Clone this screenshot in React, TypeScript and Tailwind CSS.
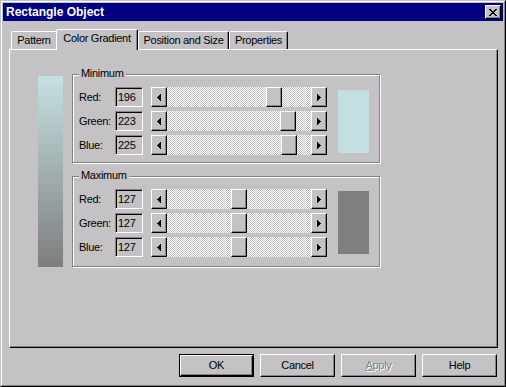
import React from "react";

const RAISED =
  "border border-t-white border-l-white border-r-black border-b-black shadow-[inset_-1px_-1px_0_#848284]";

function Arrow({ dir }: { dir: "left" | "right" }) {
  const cols = [1, 3, 5, 7];
  const order = dir === "left" ? cols : [...cols].reverse();
  return (
    <svg width="4" height="7" shapeRendering="crispEdges">
      {order.map((h, i) => (
        <rect key={i} x={i} y={(7 - h) / 2} width="1" height={h} fill="#000" />
      ))}
    </svg>
  );
}

function ArrowBtn({ dir }: { dir: "left" | "right" }) {
  return (
    <div className={`flex h-[20px] w-[16px] shrink-0 items-center justify-center bg-[#c4c2c4] ${RAISED}`}>
      <Arrow dir={dir} />
    </div>
  );
}

function ScrollBar({ value }: { value: number }) {
  const pos = Math.round((value / 255) * 129);
  return (
    <div className="flex h-[20px] w-[176px]">
      <ArrowBtn dir="left" />
      <div className="flex flex-1 bg-[image:repeating-conic-gradient(#ffffff_0%_25%,#c4c2c4_0%_50%)] bg-[length:2px_2px]">
        <div className="shrink-0" style={{ width: pos }} />
        <div className={`h-[20px] w-[16px] shrink-0 bg-[#c4c2c4] ${RAISED}`} />
      </div>
      <ArrowBtn dir="right" />
    </div>
  );
}

function Field({ value }: { value: number }) {
  return (
    <div className="h-[20px] w-[28px] border border-t-[#848284] border-l-[#848284] border-r-white border-b-white pl-[2px] text-[11px] leading-[18px] text-black shadow-[inset_1px_1px_0_#000]">
      {value}
    </div>
  );
}

function Row({ label, value }: { label: string; value: number }) {
  return (
    <div className="flex h-[20px] items-center">
      <span className="w-[36px] text-[11px] leading-[13px]">{label}</span>
      <Field value={value} />
      <div className="ml-[8px]">
        <ScrollBar value={value} />
      </div>
    </div>
  );
}

function Group({
  title,
  values,
  color,
  h,
  swatchTop,
}: {
  title: string;
  values: [number, number, number];
  color: string;
  h: string;
  swatchTop: string;
}) {
  return (
    <div
      className={`relative flex w-[308px] items-start border border-[#848284] pl-[6px] pt-[12px] shadow-[inset_1px_1px_0_#fff,1px_1px_0_#fff] ${h}`}
    >
      <span className="absolute left-[6px] top-[-8px] bg-[#c4c2c4] px-[2px] text-[11px] leading-[13px]">
        {title}
      </span>
      <div className="flex flex-col gap-[4px]">
        <Row label="Red:" value={values[0]} />
        <Row label="Green:" value={values[1]} />
        <Row label="Blue:" value={values[2]} />
      </div>
      <div className={`ml-[11px] h-[63px] w-[31px] ${swatchTop} ${color}`} />
    </div>
  );
}

function GradientBar() {
  const n = 28;
  const a = [196, 223, 225];
  const b = [127, 127, 127];
  const bands = Array.from({ length: n }, (_, i) => {
    const t = i / (n - 1);
    const c = a.map((v, k) => Math.round(v + (b[k] - v) * t));
    return `rgb(${c[0]},${c[1]},${c[2]})`;
  });
  return (
    <div className="mt-[2px] flex h-[191px] w-[25px] shrink-0 flex-col">
      {bands.map((c, i) => (
        <div key={i} className="flex-1" style={{ background: c }} />
      ))}
    </div>
  );
}

function Tab({ label, w }: { label: string; w: string }) {
  return (
    <div
      className={`flex h-[18px] items-center justify-center rounded-tl-[2px] rounded-tr-[2px] border-l border-t border-r border-l-white border-t-white border-r-black text-[11px] leading-[13px] shadow-[inset_-1px_0_0_#848284] ${w}`}
    >
      {label}
    </div>
  );
}

function Btn({ label, isDefault, disabled }: { label: React.ReactNode; isDefault?: boolean; disabled?: boolean }) {
  const inner = (
    <div
      className={`flex h-full w-full items-center justify-center text-[11px] leading-[13px] ${RAISED} ${
        disabled ? "text-[#848284] [text-shadow:1px_1px_0_#fff]" : "text-black"
      }`}
    >
      {label}
    </div>
  );
  return isDefault ? (
    <div className="h-[23px] w-[75px] border border-black">{inner}</div>
  ) : (
    <div className="h-[23px] w-[75px]">{inner}</div>
  );
}

export default function App() {
  return (
    <div className="h-[387px] w-[506px] border border-t-[#c4c2c4] border-l-[#c4c2c4] border-r-black border-b-black bg-[#c4c2c4] font-['Liberation_Sans',Arial,sans-serif] tracking-[-0.3px] text-black">
      <div className="h-full w-full border border-t-white border-l-white border-r-[#848284] border-b-[#848284] p-[1px]">
        {/* Title bar */}
        <div className="flex h-[18px] items-center justify-between bg-[#000080] pl-[3px] pr-[2px]">
          <span className="text-[12px] font-bold leading-[14px] tracking-normal text-white">Rectangle Object</span>
          <div className={`flex h-[14px] w-[16px] items-center justify-center bg-[#c4c2c4] ${RAISED}`}>
            <svg width="8" height="7" shapeRendering="crispEdges">
              {Array.from({ length: 7 }, (_, r) => (
                <g key={r}>
                  <rect x={r} y={r} width="2" height="1" fill="#000" />
                  <rect x={6 - r} y={r} width="2" height="1" fill="#000" />
                </g>
              ))}
            </svg>
          </div>
        </div>

        {/* Tabs */}
        <div className="ml-[8px] mt-[8px] flex h-[20px] items-end">
          <div className="flex h-[18px] w-[45px] items-center justify-center rounded-tl-[2px] border-l border-t border-l-white border-t-white text-[11px] leading-[13px]">
            Pattern
          </div>
          <div className="relative z-10 mb-[-1px] flex h-[21px] w-[82px] items-start justify-center rounded-tl-[2px] rounded-tr-[2px] border-l border-t border-r border-l-white border-t-white border-r-black bg-[#c4c2c4] pt-[2px] text-[11px] leading-[13px] shadow-[inset_-1px_0_0_#848284]">
            Color Gradient
          </div>
          <Tab label="Position and Size" w="w-[91px]" />
          <Tab label="Properties" w="w-[59px]" />
        </div>

        {/* Panel */}
        <div className={`relative ml-[6px] flex h-[299px] w-[489px] items-start pl-[28px] pt-[24px] ${RAISED}`}>
          <GradientBar />
          <div className="ml-[9px] flex flex-col">
            <Group
              title="Minimum"
              values={[196, 223, 225]}
              color="bg-[#c4dfe1]"
              h="h-[89px]"
              swatchTop="mt-[3px]"
            />
            <div className="mt-[13px]">
              <Group
                title="Maximum"
                values={[127, 127, 127]}
                color="bg-[#7f7f7f]"
                h="h-[91px]"
                swatchTop="mt-[2px]"
              />
            </div>
          </div>
        </div>

        {/* Buttons */}
        <div className="mt-[6px] flex justify-end gap-[6px] pr-[6px]">
          <Btn label="OK" isDefault />
          <Btn label="Cancel" />
          <Btn
            label={
              <span>
                <span className="underline">A</span>pply
              </span>
            }
            disabled
          />
          <Btn label="Help" />
        </div>
      </div>
    </div>
  );
}
